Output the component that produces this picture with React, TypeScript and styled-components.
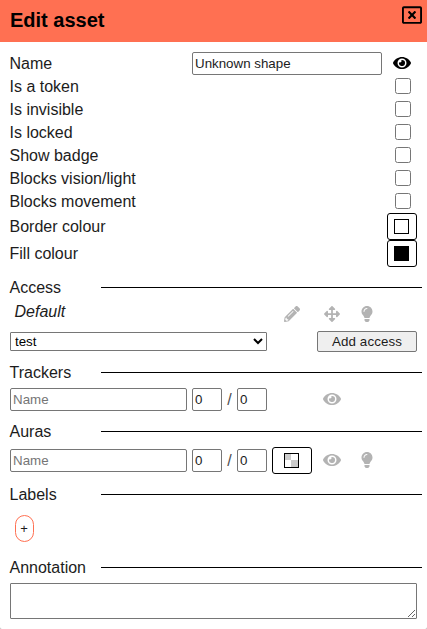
import React from "react";
import styled, { createGlobalStyle } from "styled-components";
import { FaArrowsAlt, FaEye, FaLightbulb, FaPencilAlt, FaRegWindowClose } from "react-icons/fa";

const GlobalStyle = createGlobalStyle`
  * { box-sizing: border-box; }
  html { background: #b9b9b9; }
  body { margin: 0; font: 16px/18px "Liberation Sans", Arial, sans-serif; color: #1c1c1c; }
  input, select, button, textarea { margin: 0; font: 13.333px "Liberation Sans", Arial, sans-serif; color: #1c1c1c; }
`;

const Dialog = styled.main`
  width: 427px;
  height: 629px;
  background: #fff;
  border-radius: 0 0 2px 2px;
  overflow: hidden;
`;

const Header = styled.header`
  display: flex;
  justify-content: space-between;
  height: 42px;
  padding: 5px 5px 0 10px;
  background: #ff7052;
  color: #000;
`;

const Title = styled.h1`
  margin: 0;
  font-size: 20px;
  line-height: 30px;
`;

const Body = styled.div`
  padding: 10px 10px 0;
`;

const Row = styled.div<{ $h?: number }>`
  display: grid;
  grid-template-columns: 182px 190px 5px 30px;
  align-items: center;
  height: ${(p) => p.$h ?? 23}px;
`;

const RowLabel = styled.span`
  margin-left: -0.5px;
`;

const ControlCell = styled.div`
  grid-column: 4;
  display: flex;
  align-items: center;
  justify-content: center;
  color: #000;
  > svg { margin-bottom: 2px; }
`;

const Checkbox = styled.input.attrs({ type: "checkbox" })`
  width: 16px;
  height: 16px;
  margin: 0 0 1px 2px;
`;

const Field = styled.input`
  width: 100%;
  min-width: 0;
  height: 23px;
  padding: 1px 2px;
  border: 1px solid #767676;
  border-radius: 2px;
  outline: none;
  &::placeholder { color: #757575; }
`;

const SwatchButton = styled.button<{ $wide?: boolean }>`
  display: flex;
  align-items: center;
  justify-content: center;
  width: ${(p) => (p.$wide ? 40 : 30)}px;
  height: 27px;
  padding: 0 1px 0 0;
  background: #fff;
  border: 1px solid #000;
  border-radius: 3px;
`;

const Swatch = styled.span<{ $fill: string }>`
  width: 15px;
  height: 15px;
  border: 1px solid #000;
  background: ${(p) => p.$fill};
`;

const Section = styled.h2<{ $top: number }>`
  display: grid;
  grid-template-columns: 91.5px 1fr;
  align-items: center;
  height: 19px;
  margin: ${(p) => p.$top}px -5px 0 -0.5px;
  font-size: 16px;
  font-weight: 400;
  &::after { content: ""; height: 1px; background: #000; }
`;

const ToolRow = styled.div<{ $top: number; $h: number }>`
  display: grid;
  grid-template-columns: 177px 5px 30px 15px 30px 5px 40px 40px 30px;
  grid-template-rows: 100%;
  align-items: center;
  height: ${(p) => p.$h}px;
  margin-top: ${(p) => p.$top}px;
`;

const Cell = styled.div<{ $col: number }>`
  grid-column: ${(p) => p.$col};
  grid-row: 1;
  display: flex;
  justify-content: center;
  align-items: center;
`;

const FadedCell = styled(Cell)`
  color: #b3b3b3;
  font-size: 16px;
  > svg { margin-bottom: 1.5px; }
`;

const BulbCell = styled(FadedCell)`
  padding-right: 1px;
`;

const Slash = styled(Cell)`
  color: #4d4d4d;
`;

const DefaultName = styled.em`
  padding-left: 4.5px;
  margin-bottom: 5px;
`;

const AddRow = styled.div`
  display: flex;
  justify-content: space-between;
  align-items: center;
  height: 21px;
  margin-top: 7px;
`;

const UserSelect = styled.select`
  width: 257px;
  height: 19px;
  padding: 0;
  border: 1px solid #767676;
  border-radius: 1px;
  background: #fff;
  color: #000;
`;

const AddButton = styled.button`
  width: 100px;
  height: 21px;
  padding: 0;
  background: #efefef;
  border: 1px solid #767676;
  border-radius: 2px;
  letter-spacing: 0.1px;
`;

const LabelButton = styled.button`
  display: block;
  width: 19px;
  height: 27px;
  margin: 11px 0 0 5px;
  padding: 0 1px 0 0;
  background: #fff;
  border: 1px solid #ff7052;
  border-radius: 10px;
  font-size: 13px;
`;

const Annotation = styled.textarea`
  display: block;
  width: 407px;
  height: 36px;
  margin-top: 6px;
  border: 1px solid #767676;
  border-radius: 1px;
  outline: none;
`;

const flags = ["Is a token", "Is invisible", "Is locked", "Show badge", "Blocks vision/light", "Blocks movement"];

const Checker = () => (
  <svg width="15" height="15" viewBox="0 0 15 15" shapeRendering="crispEdges">
    <rect width="15" height="15" fill="#000" />
    <rect x="1" y="1" width="13" height="13" fill="#fff" />
    <path d="M1 1h6v6H1zM7 7h7v7H7z" fill="#ccc" />
  </svg>
);

const RangeFields = () => (
  <>
    <Cell $col={1}><Field placeholder="Name" /></Cell>
    <Cell $col={3}><Field defaultValue="0" /></Cell>
    <Slash $col={4}>/</Slash>
    <Cell $col={5}><Field defaultValue="0" /></Cell>
  </>
);

export default function App() {
  return (
    <>
      <GlobalStyle />
      <Dialog>
        <Header>
          <Title>Edit asset</Title>
          <FaRegWindowClose size={20} />
        </Header>
        <Body>
          <Row>
            <RowLabel>Name</RowLabel>
            <Field defaultValue="Unknown shape" />
            <ControlCell><FaEye size={18} /></ControlCell>
          </Row>
          {flags.map((flag) => (
            <Row key={flag}>
              <RowLabel>{flag}</RowLabel>
              <ControlCell><Checkbox /></ControlCell>
            </Row>
          ))}
          <Row $h={27}>
            <RowLabel>Border colour</RowLabel>
            <ControlCell><SwatchButton><Swatch $fill="#fff" /></SwatchButton></ControlCell>
          </Row>
          <Row $h={27}>
            <RowLabel>Fill colour</RowLabel>
            <ControlCell><SwatchButton><Swatch $fill="#000" /></SwatchButton></ControlCell>
          </Row>

          <Section $top={11}>Access</Section>
          <ToolRow $top={8} $h={19}>
            <DefaultName>Default</DefaultName>
            <FadedCell $col={7}><FaPencilAlt /></FadedCell>
            <FadedCell $col={8}><FaArrowsAlt /></FadedCell>
            <BulbCell $col={9}><FaLightbulb /></BulbCell>
          </ToolRow>
          <AddRow>
            <UserSelect><option>test</option></UserSelect>
            <AddButton>Add access</AddButton>
          </AddRow>

          <Section $top={11}>Trackers</Section>
          <ToolRow $top={6} $h={23}>
            <RangeFields />
            <FadedCell $col={8}><FaEye size={18} /></FadedCell>
          </ToolRow>

          <Section $top={11}>Auras</Section>
          <ToolRow $top={6} $h={27}>
            <RangeFields />
            <Cell $col={7}><SwatchButton $wide><Checker /></SwatchButton></Cell>
            <FadedCell $col={8}><FaEye size={18} /></FadedCell>
            <BulbCell $col={9}><FaLightbulb /></BulbCell>
          </ToolRow>

          <Section $top={11}>Labels</Section>
          <LabelButton>+</LabelButton>

          <Section $top={16}>Annotation</Section>
          <Annotation />
        </Body>
      </Dialog>
    </>
  );
}
